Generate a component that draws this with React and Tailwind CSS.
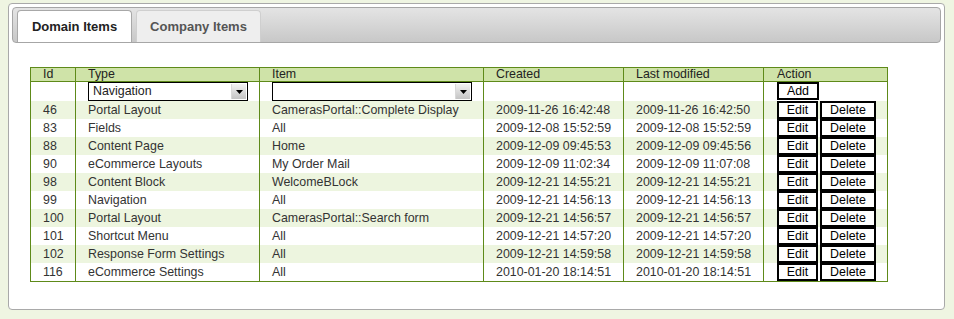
import React from "react";

const rows = [
  ["46", "Portal Layout", "CamerasPortal::Complete Display", "2009-11-26 16:42:48", "2009-11-26 16:42:50"],
  ["83", "Fields", "All", "2009-12-08 15:52:59", "2009-12-08 15:52:59"],
  ["88", "Content Page", "Home", "2009-12-09 09:45:53", "2009-12-09 09:45:56"],
  ["90", "eCommerce Layouts", "My Order Mail", "2009-12-09 11:02:34", "2009-12-09 11:07:08"],
  ["98", "Content Block", "WelcomeBLock", "2009-12-21 14:55:21", "2009-12-21 14:55:21"],
  ["99", "Navigation", "All", "2009-12-21 14:56:13", "2009-12-21 14:56:13"],
  ["100", "Portal Layout", "CamerasPortal::Search form", "2009-12-21 14:56:57", "2009-12-21 14:56:57"],
  ["101", "Shortcut Menu", "All", "2009-12-21 14:57:20", "2009-12-21 14:57:20"],
  ["102", "Response Form Settings", "All", "2009-12-21 14:59:58", "2009-12-21 14:59:58"],
  ["116", "eCommerce Settings", "All", "2010-01-20 18:14:51", "2010-01-20 18:14:51"],
];

function Select({ value, width }) {
  return (
    <div className={`flex h-[19px] items-stretch border border-black bg-white ${width}`}>
      <span className="flex-1 pl-[4px] leading-[17px] text-[12.4px] text-[#222]">{value}</span>
      <span className="my-[1px] mr-[1px] flex w-[15px] items-center justify-center bg-gradient-to-b from-[#f2f2f2] to-[#c4c4c4] border-l border-[#d8d8d8]">
        <svg width="7" height="4" viewBox="0 0 7 4"><path d="M0 0h7L3.5 4z" fill="#000" /></svg>
      </span>
    </div>
  );
}

function Btn({ children, width }) {
  return (
    <span className={`inline-flex h-[18px] items-center justify-center border-2 border-black bg-white text-[12.4px] leading-none text-black ${width}`}>
      {children}
    </span>
  );
}

export default function App() {
  const cell = "border-x border-[#5e8a19] pl-[12px] pr-[4px] text-left font-normal";
  return (
    <div className="min-h-[319px] bg-[#eff5e2] pt-[3px] pl-[8px] pr-[9px] font-['Liberation_Sans',Arial,sans-serif]">
      <div className="h-[307px] rounded-[4px] border border-[#a9a9a9] bg-white p-[3px]">
        <div className="flex h-[36px] items-end gap-[4px] rounded-[4px] border border-[#a6a6a6] bg-gradient-to-b from-[#e4e4e4] to-[#c8c8c8] pl-[4px]">
          <div className="flex h-[32px] w-[115px] items-center justify-center rounded-t-[4px] border border-b-0 border-[#a8a8a8] bg-white text-[13px] font-bold text-[#222]">
            Domain Items
          </div>
          <div className="flex h-[32px] w-[125px] items-center justify-center rounded-t-[4px] border border-b-0 border-[#cfcfcf] bg-[#eeeeee] text-[13px] font-bold text-[#555]">
            Company Items
          </div>
        </div>

        <table className="ml-[18px] mt-[24px] w-[858px] border-collapse border border-[#5e8a19] text-[12.4px] text-[#333]">
          <thead>
            <tr className="h-[14px] bg-[#cfe3a8] leading-[13px] text-[#222]">
              <th className={`${cell} w-[45px]`}>Id</th>
              <th className={`${cell} w-[184px]`}>Type</th>
              <th className={`${cell} w-[224px]`}>Item</th>
              <th className={`${cell} w-[140px]`}>Created</th>
              <th className={`${cell} w-[140px]`}>Last modified</th>
              <th className={`${cell} !pl-[13px]`}>Action</th>
            </tr>
            <tr className="h-[19px] border-t border-[#5e8a19] bg-white">
              <td className="border-x border-[#5e8a19]"></td>
              <td className="border-x border-[#5e8a19] pl-[12px]"><Select value="Navigation" width="w-[160px]" /></td>
              <td className="border-x border-[#5e8a19] pl-[12px]"><Select value="" width="w-[200px]" /></td>
              <td className="border-x border-[#5e8a19]"></td>
              <td className="border-x border-[#5e8a19]"></td>
              <td className="border-x border-[#5e8a19] pl-[13px]"><Btn width="w-[42px]">Add</Btn></td>
            </tr>
          </thead>
          <tbody>
            {rows.map((r, i) => (
              <tr key={r[0]} className={`h-[18px] leading-[14px] ${i % 2 === 0 ? "bg-[#edf5df]" : "bg-white"}`}>
                <td className={cell}>{r[0]}</td>
                <td className={cell}>{r[1]}</td>
                <td className={cell}>{r[2]}</td>
                <td className={cell}>{r[3]}</td>
                <td className={cell}>{r[4]}</td>
                <td className="border-x border-[#5e8a19] pl-[13px]">
                  <div className="flex gap-[2px]">
                    <Btn width="w-[41px]">Edit</Btn>
                    <Btn width="w-[56px]">Delete</Btn>
                  </div>
                </td>
              </tr>
            ))}
          </tbody>
        </table>
      </div>
    </div>
  );
}
